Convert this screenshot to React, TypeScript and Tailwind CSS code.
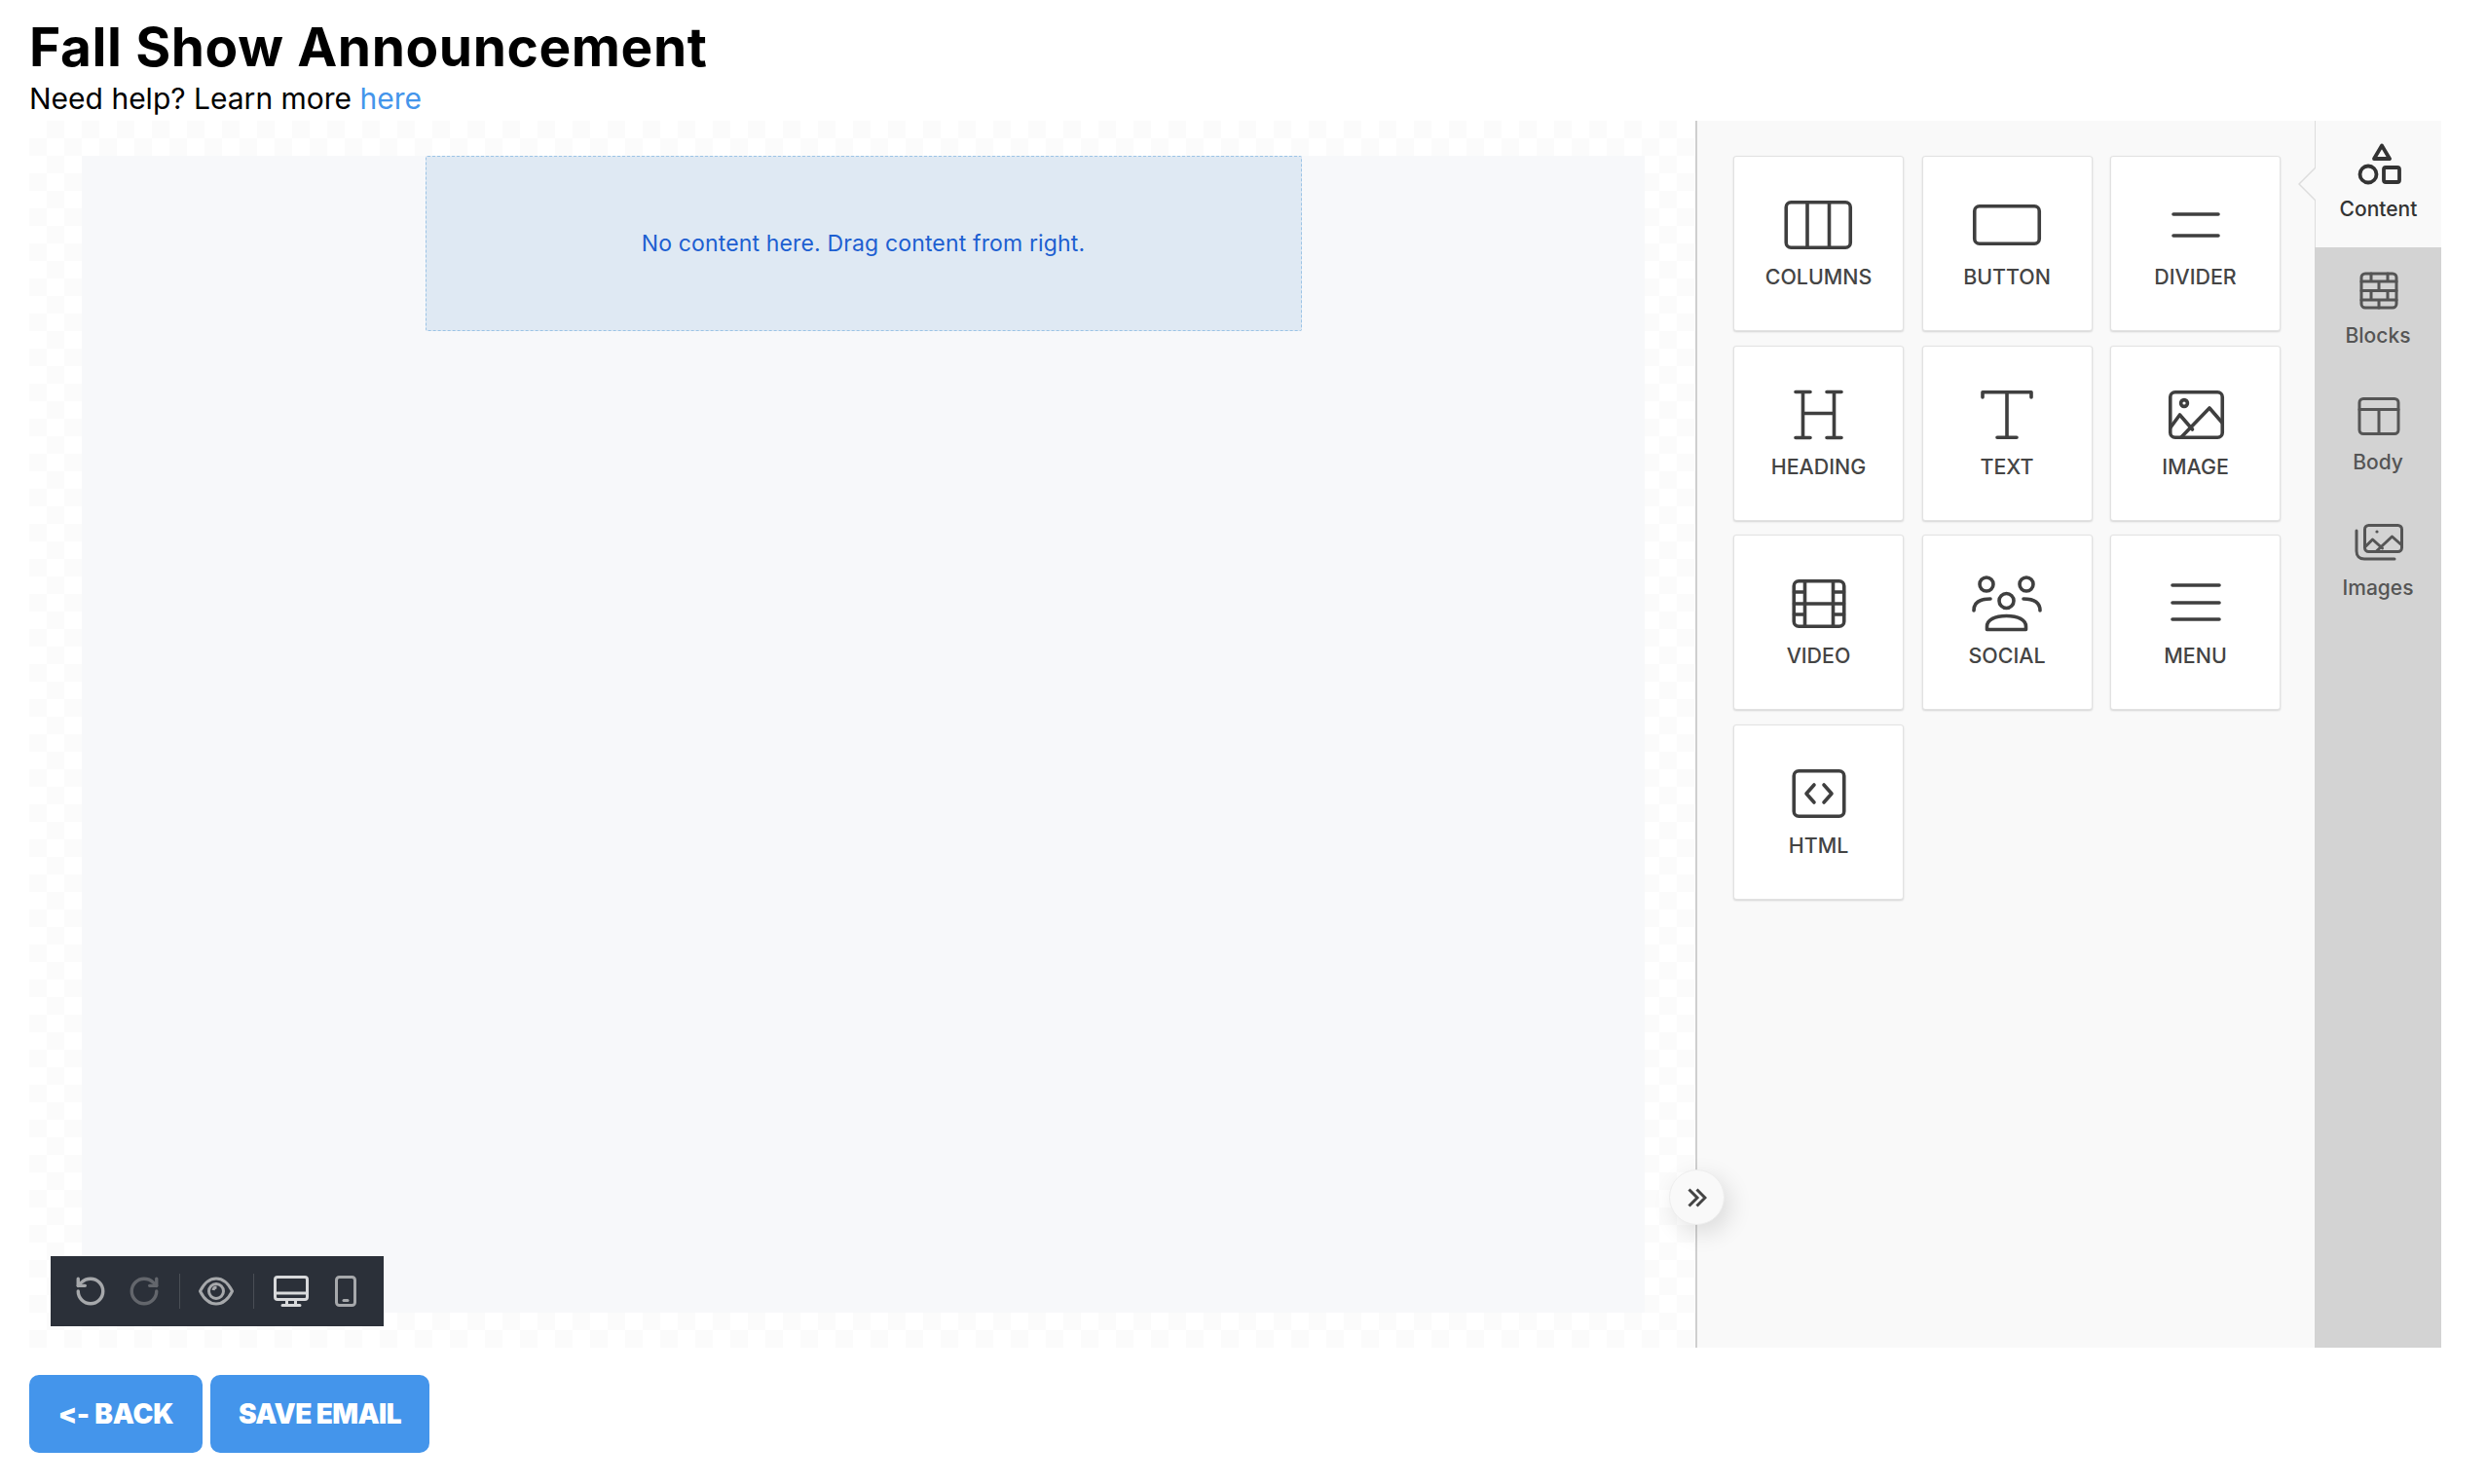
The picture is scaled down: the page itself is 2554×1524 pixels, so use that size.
import { RotateCcw, RotateCw } from 'lucide-react';
import type { ReactNode } from 'react';

const INK = '#3f3f3f';

function CardIcon({ children }: { children: ReactNode }) {
  return (
    <svg
      width="72"
      height="60"
      viewBox="0 0 72 60"
      fill="none"
      stroke={INK}
      strokeWidth="3.6"
      strokeLinecap="round"
      strokeLinejoin="round"
    >
      {children}
    </svg>
  );
}

const TOOLS: { label: string; icon: ReactNode }[] = [
  {
    label: 'COLUMNS',
    icon: (
      <>
        <rect x="2.25" y="6.75" width="66" height="46.5" rx="5" />
        <path d="M24 7v46M46.5 7v46" />
      </>
    ),
  },
  {
    label: 'BUTTON',
    icon: <rect x="2.75" y="10.75" width="66.5" height="38.5" rx="5" />,
  },
  {
    label: 'DIVIDER',
    icon: <path d="M13 19h46M13 41h46" />,
  },
  {
    label: 'HEADING',
    icon: (
      <path d="M12 6.5h15M44 6.5h15M12 53.5h15M44 53.5h15M19.5 6.5v47M51.5 6.5v47M19.5 28.5h32" />
    ),
  },
  {
    label: 'TEXT',
    icon: <path d="M11 12V6.75h50V12M36 6.75v46.5M26 53.25h20" />,
  },
  {
    label: 'IMAGE',
    icon: (
      <>
        <rect x="9.75" y="6.75" width="53.5" height="46.5" rx="5" />
        <circle cx="24" cy="18" r="3.4" />
        <path d="M10 43l9.5-13 13 15M21 53l29-30 13 15" />
      </>
    ),
  },
  {
    label: 'VIDEO',
    icon: (
      <>
        <rect x="10.25" y="6.75" width="51.5" height="46.5" rx="5" />
        <path d="M21.5 7v46M50.5 7v46M21.5 30h29M10.5 18h11M10.5 30h11M10.5 41h11M50.5 18h11M50.5 30h11M50.5 41h11" />
      </>
    ),
  },
  {
    label: 'SOCIAL',
    icon: (
      <>
        <circle cx="15" cy="10" r="7" />
        <circle cx="56" cy="10" r="7" />
        <circle cx="35.5" cy="27" r="7.5" />
        <path d="M2 37c0-7 4-12 17-12M70 37c0-7-4-12-17-12M15.5 56.5v-3c0-7 8-11 20-11s20 4 20 11v3z" />
      </>
    ),
  },
  {
    label: 'MENU',
    icon: <path d="M12 11h48M12 29h48M12 46h48" />,
  },
  {
    label: 'HTML',
    icon: (
      <>
        <rect x="10.25" y="6.75" width="51.5" height="46.5" rx="5" />
        <path d="M31 21l-8 9 8 9M41 21l8 9-8 9" />
      </>
    ),
  },
];

function TabIcon({ children, active }: { children: ReactNode; active?: boolean }) {
  return (
    <svg
      width="54"
      height="44"
      viewBox="0 0 54 44"
      fill="none"
      stroke={active ? '#333333' : '#555555'}
      strokeWidth={active ? 3.8 : 3}
      strokeLinecap="round"
      strokeLinejoin="round"
    >
      {children}
    </svg>
  );
}

const TABS: { label: string; icon: ReactNode }[] = [
  {
    label: 'Content',
    icon: (
      <>
        <path d="M30 2.5l8 13.5H22z" />
        <circle cx="16" cy="32" r="8.5" />
        <rect x="32" y="25" width="16" height="15" rx="2" />
      </>
    ),
  },
  {
    label: 'Blocks',
    icon: (
      <>
        <rect x="10" y="4" width="36" height="35" rx="4" />
        <path d="M10 12h36M10 21.5h36M10 31h36M20 4v8M37 4v8M28 12v9.5M20 21.5V31M37 21.5V31M28 31v8" />
      </>
    ),
  },
  {
    label: 'Body',
    icon: (
      <>
        <rect x="8" y="2.5" width="40" height="36" rx="4" />
        <path d="M8 13.5h40M28 13.5v25" />
      </>
    ),
  },
  {
    label: 'Images',
    icon: (
      <>
        <rect x="13.5" y="3.5" width="38" height="27" rx="4" />
        <path d="M5 9v21c0 5 3 8 8 8h31" />
        <circle cx="26" cy="10" r="1.6" fill="#555555" stroke="none" />
        <path d="M13.5 26l8-8 10 9M25.5 30l16-15 9 8" />
      </>
    ),
  },
];

function Toolbar() {
  return (
    <div className="absolute left-[22px] top-[1166px] flex h-[72px] w-[342px] items-center bg-[#2b3039]">
      <RotateCcw size={34} strokeWidth={2.4} className="ml-[24px] text-[#a6a8ab]" />
      <RotateCw size={34} strokeWidth={2.4} className="ml-[21px] text-[#63666c]" />
      <div className="ml-[19px] h-9 w-px bg-[#4a4e55]" />
      <svg
        width="36"
        height="30"
        viewBox="0 0 36 30"
        fill="none"
        stroke="#a6a8ab"
        strokeWidth="3"
        className="ml-[19px]"
      >
        <path d="M1.5 15C6 6 11.5 2 18 2s12 4 16.5 13C30 24 24.5 28 18 28S6 24 1.5 15z" />
        <circle cx="18" cy="15" r="7.5" />
        <path d="M15 14a3.5 3.5 0 0 1 3.5-3" />
      </svg>
      <div className="ml-[20px] h-9 w-px bg-[#4a4e55]" />
      <svg
        width="36"
        height="32"
        viewBox="0 0 36 32"
        fill="none"
        stroke="#d8d9db"
        strokeWidth="3"
        strokeLinecap="round"
        className="ml-[20px]"
      >
        <rect x="1.5" y="1.5" width="33" height="23" rx="2.5" />
        <path d="M1.5 18h33M13.5 25v5M22.5 25v5M9 30.5h18" />
      </svg>
      <svg
        width="22"
        height="32"
        viewBox="0 0 22 32"
        fill="none"
        stroke="#a6a8ab"
        strokeWidth="3"
        strokeLinecap="round"
        className="ml-[27px]"
      >
        <rect x="1.5" y="1.5" width="19" height="29" rx="3" />
        <path d="M9 25.5h4" />
      </svg>
    </div>
  );
}

export default function App() {
  return (
    <div className="h-[1524px] w-full overflow-hidden bg-white font-['Inter',sans-serif]">
      <div className="h-[124px] pl-[30px] pt-[16px]">
        <h1 className="text-[55px] font-bold leading-[64px] tracking-[0.6px] text-black">
          Fall Show Announcement
        </h1>
        <p className="mt-px text-[30px] leading-[40px] text-black">
          Need help? Learn more <a className="text-[#4495eb]">here</a>
        </p>
      </div>

      <div className="relative ml-[30px] mr-[47px] flex h-[1260px]">
        {/* canvas */}
        <div className="w-[1711px] bg-[repeating-conic-gradient(#fbfbfb_0_25%,#ffffff_0_50%)] bg-[length:36px_36px] pb-[36px] pl-[54px] pr-[52px] pt-[36px]">
          <div className="flex h-full justify-center bg-[#f7f8fa]">
            <div className="flex h-[180px] w-[900px] items-center justify-center rounded-[2px] border border-dashed border-[#9cc4e6] bg-[#dfe9f3] text-[23px] tracking-[0.15px] text-[#1d5fd1]">
              No content here. Drag content from right.
            </div>
          </div>
        </div>

        <Toolbar />

        {/* collapse handle */}
        <div className="w-[2px] bg-[#cfcfcf]" />
        <div className="absolute left-[1684px] top-[1077px] flex h-[57px] w-[57px] items-center justify-center rounded-full border border-[#eeeeee] bg-[#f9f9f9] shadow-[6px_8px_24px_rgba(0,0,0,0.12)]">
          <svg width="20" height="20" viewBox="0 0 20 20" fill="none" stroke="#444444" strokeWidth="3">
            <path d="M1.5 1.5L10 10l-8.5 8.5M9.5 1.5L18 10l-8.5 8.5" />
          </svg>
        </div>

        {/* tools panel */}
        <div className="w-[634px] bg-[#f9f9f9] pl-[37px] pt-[36px]">
          <div className="grid grid-cols-[175px_175px_175px] gap-x-[18.5px] gap-y-[14.5px]">
            {TOOLS.map((tool) => (
              <div
                key={tool.label}
                className="flex h-[180px] flex-col items-center rounded-[3px] border border-[#e2e2e2] bg-white pt-[40px] shadow-[0_1px_2px_rgba(0,0,0,0.15)]"
              >
                <CardIcon>{tool.icon}</CardIcon>
                <span className="mt-[11px] text-[21.4px] font-medium leading-[24px] text-[#444444]">
                  {tool.label}
                </span>
              </div>
            ))}
          </div>
        </div>

        {/* tabs */}
        <div className="relative w-[130px] bg-[#d3d3d3]">
          {TABS.map((tab, i) => (
            <div
              key={tab.label}
              className={
                i === 0
                  ? 'flex h-[130px] flex-col items-center border-l border-[#dddddd] bg-[#f9f9f9] pt-[23px] text-[#333333]'
                  : 'flex h-[129.5px] flex-col items-center pt-[23px] text-[#555555]'
              }
            >
              <TabIcon active={i === 0}>{tab.icon}</TabIcon>
              <span className="mt-[11px] text-[21px] font-medium leading-[26px]">{tab.label}</span>
            </div>
          ))}
          <svg
            width="18"
            height="36"
            viewBox="0 0 18 36"
            fill="#f9f9f9"
            stroke="#dddddd"
            strokeWidth="1.5"
            className="absolute left-[-17px] top-[47px]"
          >
            <path d="M18 1L1 18l17 17" />
          </svg>
        </div>
      </div>

      <div className="ml-[30px] mt-[28px] flex gap-2">
        <button className="h-[80px] w-[178px] rounded-[10px] bg-[#4495eb] text-[28px] font-black tracking-[-0.2px] text-white">
          {'<- BACK'}
        </button>
        <button className="h-[80px] w-[225px] rounded-[10px] bg-[#4495eb] text-[28px] font-black tracking-[-0.6px] text-white">
          SAVE EMAIL
        </button>
      </div>
    </div>
  );
}
